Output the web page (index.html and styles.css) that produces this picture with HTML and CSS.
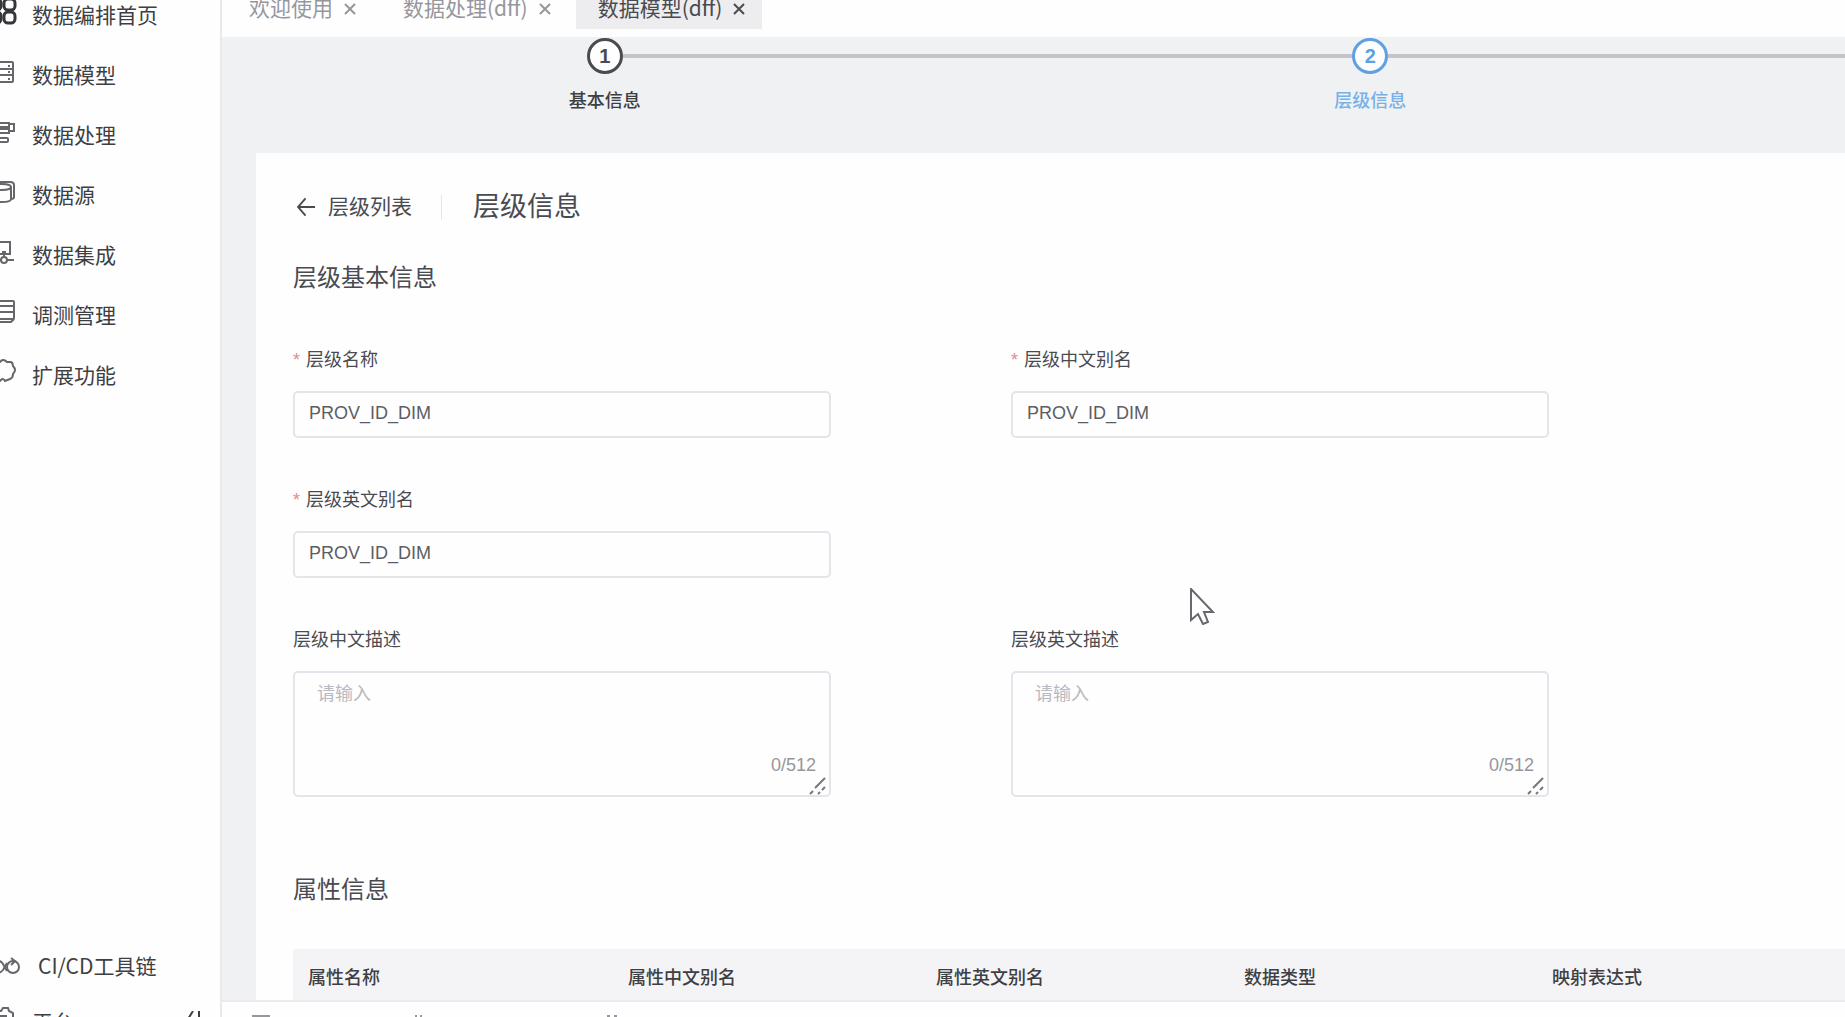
FILE: index.html
```html
<!DOCTYPE html>
<html lang="zh-CN">
<head>
<meta charset="utf-8">
<title>数据模型 - 层级信息</title>
<link rel="stylesheet" href="styles.css">
</head>
<body>
<div class="app">
  <aside class="sidebar">
    <nav class="nav nav-main">
      <a class="nav-item" href="#"><svg class="nav-icon strong" viewBox="0 0 24 26"><rect x="-3" y="1" width="11" height="11" rx="4"/><rect x="11" y="1" width="11" height="11" rx="4"/><rect x="-3" y="14" width="11" height="11" rx="4"/><rect x="11" y="14" width="11" height="11" rx="4"/></svg>数据编排首页</a>
      <a class="nav-item" href="#"><svg class="nav-icon" viewBox="0 0 24 26"><rect x="1" y="4" width="19" height="20" rx="1"/><path d="M1 11h19M1 17h19M15 8h2M15 14h2M15 21h2"/></svg>数据模型</a>
      <a class="nav-item" href="#"><svg class="nav-icon" viewBox="0 0 24 26"><rect x="2" y="5" width="14" height="4"/><path d="M16 6h5v7h-5"/><rect x="6" y="11" width="10" height="4"/><rect x="4" y="20" width="11" height="4" rx="1"/></svg>数据处理</a>
      <a class="nav-item" href="#"><svg class="nav-icon" viewBox="0 0 24 26"><path d="M4 4h13q4 0 4 3v12q0 2-3 2"/><ellipse cx="9" cy="9" rx="9" ry="3"/><path d="M0 9v12q0 3 9 3t9-3V9"/></svg>数据源</a>
      <a class="nav-item" href="#"><svg class="nav-icon" viewBox="0 0 24 26"><path d="M3 16V4h14v12zM11 16v3M1 22h7M14 22h7"/><circle cx="11" cy="22" r="3"/><path d="M10 14h2v2h-2z"/></svg>数据集成</a>
      <a class="nav-item" href="#"><svg class="nav-icon" viewBox="0 0 24 26"><rect x="1" y="3" width="20" height="18" rx="1"/><path d="M5 8h15M5 14h15M3 24h15l3-3"/></svg>调测管理</a>
      <a class="nav-item" href="#"><svg class="nav-icon" viewBox="0 0 24 26"><path d="M3 4h4q3-4 7 0h4q2 1 2 4 4 4 0 8 0 4-3 5l-5 2q-2-4-5 0H3z"/></svg>扩展功能</a>
    </nav>
    <nav class="nav nav-tools">
      <a class="nav-item wide" href="#"><svg class="nav-icon" viewBox="0 0 24 26"><circle cx="20" cy="18" r="6"/><path d="M1 13q6-3 9 2l4 7M14 14l-4 7q-4 5-9 1M18 9l4 3-4 4"/></svg>CI/CD工具链</a>
      <div class="nav-row">
        <a class="nav-item" href="#"><svg class="nav-icon" viewBox="0 0 24 26"><path d="M2 6h6l2-3h5l1 3 4 2v15H2zM6 11h8"/></svg>平台</a>
        <button class="collapse" type="button" aria-label="收起菜单"><svg viewBox="0 0 16 20"><path d="M7 0L2 8l5 8M13 0v15"/></svg></button>
      </div>
    </nav>
  </aside>

  <div class="main">
    <div class="tabs">
      <div class="tab"><a href="#">欢迎使用</a><button type="button" aria-label="关闭"><svg viewBox="0 0 12 12"><path d="M1 1l10 10M11 1L1 11"/></svg></button></div>
      <div class="tab"><a href="#">数据处理(dff)</a><button type="button" aria-label="关闭"><svg viewBox="0 0 12 12"><path d="M1 1l10 10M11 1L1 11"/></svg></button></div>
      <div class="tab active"><a href="#">数据模型(dff)</a><button type="button" aria-label="关闭"><svg viewBox="0 0 12 12"><path d="M1 1l10 10M11 1L1 11"/></svg></button></div>
    </div>

    <ol class="steps">
      <li class="step first"><div class="step-head"><span class="step-num">1</span></div><span class="step-title">基本信息</span></li>
      <li class="step current"><div class="step-head"><span class="step-num">2</span></div><span class="step-title">层级信息</span></li>
      <li class="step"><div class="step-head"></div></li>
    </ol>

    <section class="card">
      <header class="page-head">
        <a class="back" href="#"><svg viewBox="0 0 20 20"><path d="M19 10H1M9 1L1 10l8 9"/></svg>层级列表</a>
        <h1>层级信息</h1>
      </header>
      <h2>层级基本信息</h2>
      <form class="form">
        <div class="field"><label class="required" for="name">层级名称</label><input id="name" type="text" value="PROV_ID_DIM"></div>
        <div class="field"><label class="required" for="cn">层级中文别名</label><input id="cn" type="text" value="PROV_ID_DIM"></div>
        <div class="field first-col"><label class="required" for="en">层级英文别名</label><input id="en" type="text" value="PROV_ID_DIM"></div>
        <div class="field first-col"><label for="cnd">层级中文描述</label>
          <div class="area"><textarea id="cnd" placeholder="请输入"></textarea><span class="count">0/512</span><svg class="grip" viewBox="0 0 18 18"><path d="M1 17l3-3M6 11L16 1M9 17l2-2M13 13l3-3"/></svg></div></div>
        <div class="field"><label for="end">层级英文描述</label>
          <div class="area"><textarea id="end" placeholder="请输入"></textarea><span class="count">0/512</span><svg class="grip" viewBox="0 0 18 18"><path d="M1 17l3-3M6 11L16 1M9 17l2-2M13 13l3-3"/></svg></div></div>
      </form>
      <h2>属性信息</h2>
      <table class="attrs">
        <thead><tr><th class="col-name">属性名称</th><th>属性中文别名</th><th>属性英文别名</th><th>数据类型</th><th>映射表达式</th></tr></thead>
      </table>
    </section>

    <footer class="footer">
      <svg class="foot-bar" viewBox="0 0 18 2"><path d="M0 1h18"/></svg>
      <svg class="foot-mark" viewBox="0 0 10 2"><path d="M1 1h2M6 1h2"/></svg>
      <svg class="foot-mark last" viewBox="0 0 10 2"><path d="M0 1h3M7 1h3"/></svg>
    </footer>
  </div>
</div>
<svg class="pointer" viewBox="0 0 25 37"><path d="M1 1v31l7-6 5 10 5-2-4-10h9z"/></svg>
</body>
</html>
```
FILE: styles.css
```css
* { box-sizing: border-box; }

body {
  margin: 0;
  overflow: hidden;
  background: #fefefe;
  color: #4a4b50;
  font: 18px/26px "Liberation Sans", "Noto Sans CJK SC", sans-serif;
}

a { color: inherit; text-decoration: none; }
svg { fill: none; stroke: currentColor; }
button { padding: 0; border: 0; background: none; color: inherit; }

.app { display: flex; height: 100vh; overflow: hidden; }

/* sidebar */
.sidebar {
  display: flex;
  flex: none;
  flex-direction: column;
  justify-content: space-between;
  width: 222px;
  overflow: hidden;
  border-right: 2px solid #e9e9ec;
}
.nav { font: 21px/60px "Noto Sans CJK SC", sans-serif; color: #3e3f43; }
.nav-main { margin-top: -16px; }
.nav-tools { margin-bottom: -34px; }
.nav-item { display: flex; align-items: center; gap: 15px; height: 60px; }
.nav-item.wide { gap: 21px; }
.nav-icon { flex: none; width: 24px; height: 26px; margin: 0 0 6px -7px; overflow: visible; stroke-width: 2; color: #66676b; }
.nav-icon.strong { color: #35363a; stroke-width: 3; }
.nav-row { display: flex; justify-content: space-between; margin-top: -4px; padding-right: 18px; }
.collapse svg { display: block; width: 16px; height: 20px; stroke-width: 2; }

/* main column */
.main { display: flex; flex: 1; flex-direction: column; min-width: 0; background: #f0f1f3; }

.tabs {
  display: flex;
  flex: none;
  align-items: flex-start;
  gap: 8px;
  height: 37px;
  padding-left: 5px;
  overflow: hidden;
  background: #fefefe;
  font: 21px/44px "Noto Sans CJK SC", sans-serif;
  color: #96979d;
}
.tab { display: flex; align-items: center; gap: 11px; height: 44px; margin-top: -15px; padding: 0 17px 0 22px; }
.tab svg { display: block; width: 12px; height: 12px; margin-top: 4px; stroke-width: 2; }
.tab.active { background: #ededf0; color: #4a4b50; }

/* steps */
.steps {
  display: grid;
  flex: none;
  grid-template-columns: 1fr 1fr 92px;
  height: 116px;
  margin: 0;
  padding: 0;
  overflow: hidden;
  list-style: none;
}
.step { display: flex; flex-direction: column; align-items: center; gap: 14px; }
.step-head { display: flex; align-items: center; width: 100%; height: 37px; }
.step-head::before, .step-head::after { content: ""; flex: 1; height: 4px; background: #c5c4ca; }
.step.first .step-head::before { background: none; }
.step-num {
  width: 36px;
  height: 36px;
  border: 3px solid #4a4b50;
  border-radius: 50%;
  background: #fefefe;
  font-weight: bold;
  font-size: 20px;
  line-height: 30px;
  text-align: center;
}
.step-title { font-weight: 500; color: #3e3f43; }
.current .step-num { border-color: #609fe2; color: #609fe2; }
.current .step-title { color: #78b0e8; }

/* content card */
.card { flex: 1; min-height: 0; margin-left: 34px; padding: 34px 0 0 37px; overflow: hidden; background: #fefefe; }
.page-head { display: flex; align-items: center; height: 40px; margin-bottom: 33px; }
.back { display: flex; align-items: center; gap: 12px; padding-left: 4px; font-size: 21px; }
.back svg { width: 19px; height: 20px; stroke-width: 2; }
h1 { margin: 0 0 0 29px; padding-left: 31px; border-left: 1px solid #e6e7ec; font-size: 27px; font-weight: 400; line-height: 25px; }
h2 { margin: 0; font-size: 24px; font-weight: 400; line-height: 36px; }

.form {
  display: grid;
  grid-template-columns: 1fr 1fr;
  gap: 49px 180px;
  margin: 51px 0 75px;
  padding-right: 296px;
}
.first-col { grid-column: 1; }
.field { display: flex; flex-direction: column; gap: 18px; }
.required::before { content: "*"; margin-right: 6px; color: #e58a8a; }
input, textarea {
  display: block;
  width: 100%;
  border: 2px solid #e4e4ea;
  border-radius: 5px;
  background: #fefefe;
  color: #5c5d63;
  font: inherit;
  outline: 0;
}
input { height: 47px; padding: 0 14px 2px; }
.area { position: relative; }
textarea { height: 126px; padding: 8px 22px; resize: none; }
::placeholder { color: #b9b9c1; opacity: 1; }
.count { position: absolute; right: 15px; bottom: 19px; color: #96979d; }
.grip { position: absolute; right: 4px; bottom: 2px; width: 18px; height: 18px; stroke-width: 2; color: #77787d; }

.attrs { width: 100%; margin-top: 41px; border-collapse: collapse; table-layout: fixed; background: #f4f4f7; }
.attrs th { height: 58px; padding: 0 15px; color: #3e3f43; font-weight: 500; text-align: left; }
.attrs .col-name { width: 320px; }

.footer {
  display: flex;
  flex: none;
  align-items: flex-end;
  height: 17px;
  padding-left: 30px;
  border-top: 2px solid #ebebed;
  background: #fefefe;
  color: #96979d;
}
.footer svg { height: 2px; stroke-width: 2; }
.foot-bar { width: 18px; }
.foot-mark { width: 10px; margin-left: 144px; }
.foot-mark.last { margin-left: 183px; }

.pointer { position: absolute; top: 588px; left: 1190px; width: 25px; height: 37px; fill: #fefefe; color: #66676f; stroke-width: 2; }
```
